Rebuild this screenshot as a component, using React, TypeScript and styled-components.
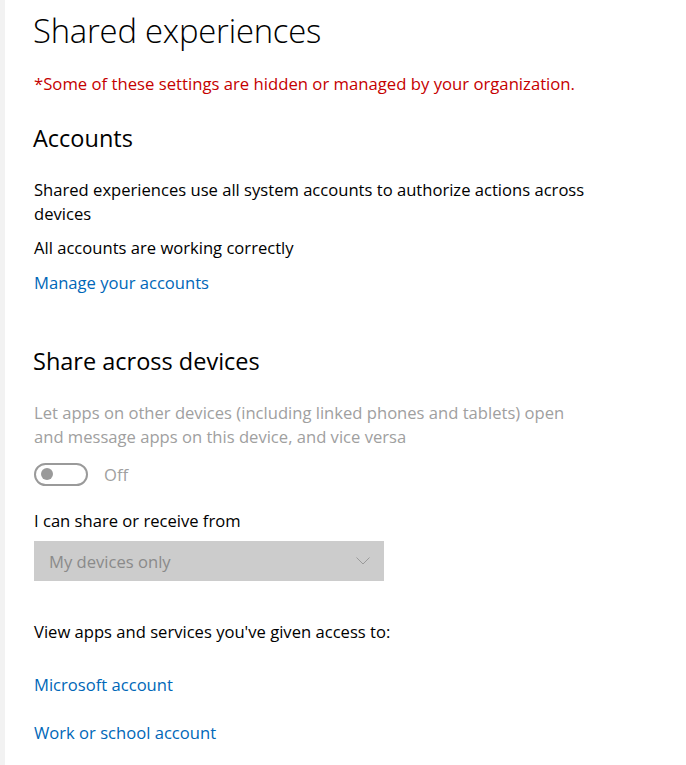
import React from 'react';
import styled, { createGlobalStyle } from 'styled-components';

const GlobalStyle = createGlobalStyle`
  html, body {
    margin: 0;
    padding: 0;
    background: #ffffff;
  }
  body {
    font-family: "Open Sans", "Noto Sans", sans-serif;
    color: #000000;
  }
`;

const Shell = styled.div`
  display: flex;
  min-height: 765px;
`;

const Strip = styled.div`
  width: 5px;
  background: #f2f2f2;
  flex-shrink: 0;
`;

const Content = styled.main`
  flex: 1;
  display: flex;
  flex-direction: column;
  align-items: flex-start;
  padding: 11px 0 0 28px;
`;

const Title = styled.h1`
  margin: 0;
  font-size: 32.8px;
  font-weight: 300;
  line-height: 40px;
  letter-spacing: -0.2px;
`;

const Note = styled.p`
  margin: 23px 0 0 1px;
  font-size: 16.7px;
  line-height: 20px;
  color: #c50000;
`;

const SectionTitle = styled.h2<{ gap: number }>`
  margin: ${p => p.gap}px 0 0;
  font-size: 23.5px;
  font-weight: 400;
  line-height: 28px;
`;

const Text = styled.p<{ gap: number; muted?: boolean }>`
  margin: ${p => p.gap}px 0 0 1px;
  max-width: 560px;
  font-size: 16.6px;
  line-height: 24px;
  color: ${p => (p.muted ? '#a0a0a0' : '#000000')};
`;

const Link = styled.a<{ gap: number }>`
  margin: ${p => p.gap}px 0 0 1px;
  font-size: 16.6px;
  line-height: 24px;
  color: #0067b8;
  text-decoration: none;
  cursor: pointer;
`;

const ToggleRow = styled.div`
  margin: 13px 0 0 1px;
  display: flex;
  align-items: center;
  gap: 16px;
  height: 24px;
`;

const Track = styled.div`
  box-sizing: border-box;
  width: 54px;
  height: 23px;
  border: 2px solid #9a9a9a;
  border-radius: 12px;
  display: flex;
  align-items: center;
  padding-left: 5px;
`;

const Knob = styled.span`
  width: 12px;
  height: 12px;
  border-radius: 50%;
  background: #9a9a9a;
`;

const ToggleLabel = styled.span`
  font-size: 16.6px;
  color: #a0a0a0;
`;

const Select = styled.div`
  margin: 8px 0 0 1px;
  box-sizing: border-box;
  width: 350px;
  height: 40px;
  background: #cccccc;
  display: flex;
  align-items: center;
  justify-content: space-between;
  padding: 0 14px 0 15px;
  font-size: 16.6px;
  color: #8a8a8a;
`;

function Chevron() {
  return (
    <svg width="14" height="8" viewBox="0 0 14 8" fill="none">
      <path d="M0.5 0.5 L7 7 L13.5 0.5" stroke="#9a9a9a" strokeWidth="1" />
    </svg>
  );
}

export default function App() {
  return (
    <Shell>
      <GlobalStyle />
      <Strip />
      <Content>
        <Title>Shared experiences</Title>
        <Note>*Some of these settings are hidden or managed by your organization.</Note>

        <SectionTitle gap={30}>Accounts</SectionTitle>
        <Text gap={26}>Shared experiences use all system accounts to authorize actions across devices</Text>
        <Text gap={10}>All accounts are working correctly</Text>
        <Link gap={11}>Manage your accounts</Link>

        <SectionTitle gap={52}>Share across devices</SectionTitle>
        <Text gap={26} muted>
          Let apps on other devices (including linked phones and tablets) open and message apps on this device, and vice versa
        </Text>
        <ToggleRow>
          <Track>
            <Knob />
          </Track>
          <ToggleLabel>Off</ToggleLabel>
        </ToggleRow>

        <Text gap={23}>I can share or receive from</Text>
        <Select>
          <span>My devices only</span>
          <Chevron />
        </Select>

        <Text gap={39}>View apps and services you've given access to:</Text>
        <Link gap={29}>Microsoft account</Link>
        <Link gap={24}>Work or school account</Link>
      </Content>
    </Shell>
  );
}
